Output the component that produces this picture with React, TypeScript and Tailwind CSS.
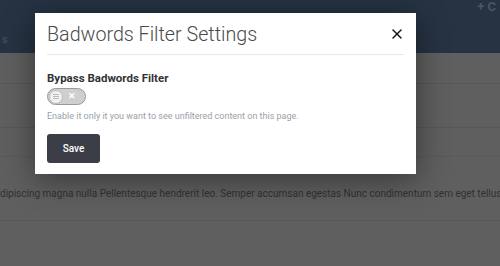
import { X } from "lucide-react";

const FONT = { fontFamily: "Roboto, 'Liberation Sans', sans-serif" };

export default function App() {
	return (
		<div className="relative h-[266px] w-[500px] overflow-hidden bg-[#5f5f5f]" style={FONT}>
			{/* page underneath (dimmed) */}
			<header className="flex h-[53px] items-start justify-between bg-[#263343] pl-[2px] pr-1">
				<span className="mt-[32px] text-[11px] font-bold text-[#3f4c5c]">s</span>
				<span className="-mt-[3px] text-[13px] font-bold text-[#4b5563]">+ C</span>
			</header>
			<div className="h-[31px] border-b border-[#575757]" />
			<div className="h-[44px] border-b border-[#575757]" />
			<div className="h-[29px] border-b border-[#5a5a5a]" />
			<div className="h-[64px] overflow-hidden border-b border-[#585858] pt-[30px]">
				<p className="whitespace-nowrap text-[10px] leading-[14px] text-[#2f3136]">
					dipiscing magna nulla Pellentesque hendrerit leo. Semper accumsan egestas Nunc condimentum sem eget tellus n
				</p>
			</div>

			{/* modal */}
			<div className="absolute left-[35px] top-[13px] w-[381px] bg-white px-[12px] shadow-[0_5px_30px_rgba(0,0,0,0.45)]">
				<div className="flex h-[42px] items-center justify-between border-b border-[#e8e8e8]">
					<h2 className="mt-[3px] text-[19.7px] font-light leading-[24px] text-[#4a4a4a]">Badwords Filter Settings</h2>
					<X className="mr-[-1px] mt-[1px] h-[16px] w-[16px] text-[#111]" strokeWidth={2.2} />
				</div>
				<div className="pb-[11px] pt-[16px]">
					<p className="text-[11.5px] font-bold leading-[14px] text-[#333]">Bypass Badwords Filter</p>
					<div className="mt-[3px] flex h-[17px] w-[39px] items-center justify-between rounded-full border border-[#9a9a9a] bg-[#cfcfcf] px-[1px]">
						<span className="flex h-[14px] w-[14px] flex-col items-center justify-center gap-[1px] rounded-full border border-[#bbb] bg-[#f2f2f2]">
							<span className="h-px w-[6px] bg-[#bbb]" />
							<span className="h-px w-[6px] bg-[#bbb]" />
							<span className="h-px w-[6px] bg-[#bbb]" />
						</span>
						<span className="mr-[8px] text-[9px] font-bold leading-none text-white">✕</span>
					</div>
					<p className="mt-[5px] text-[9px] leading-[13px] text-[#9aa0a8]">
						Enable it only it you want to see unfiltered content on this page.
					</p>
					<button
						className="mt-[11px] h-[29px] w-[53px] rounded-[3px] bg-[#3b3e46] text-[10px] font-medium text-white"
						type="button"
					>
						Save
					</button>
				</div>
			</div>
		</div>
	);
}
